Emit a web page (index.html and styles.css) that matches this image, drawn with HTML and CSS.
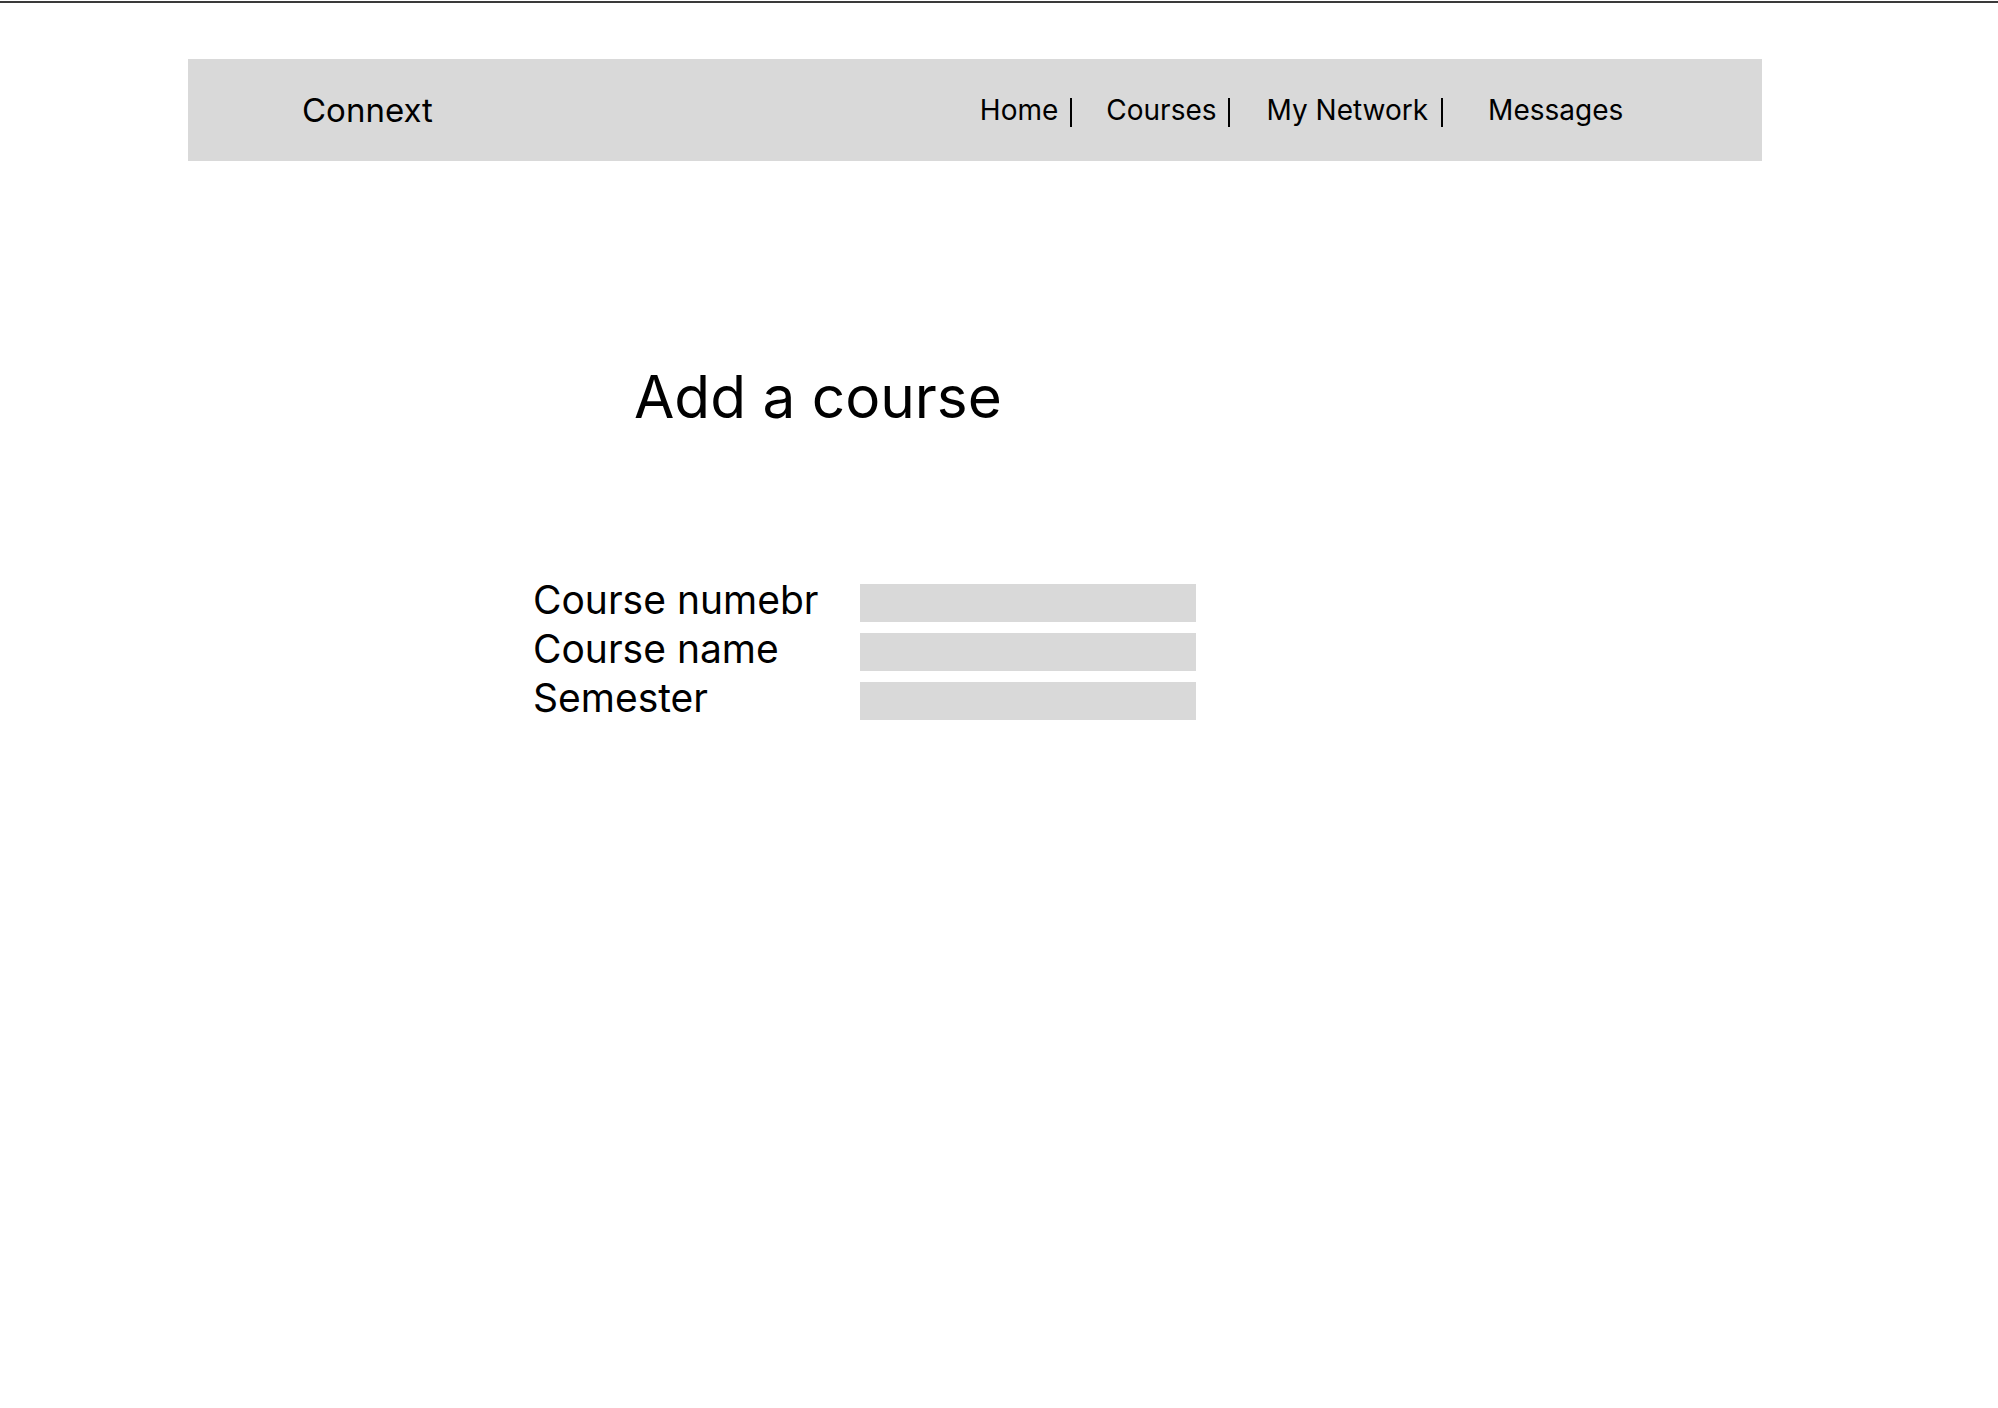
FILE: index.html
```html
<!DOCTYPE html>
<html lang="en">
<head>
<meta charset="utf-8">
<title>Connext - Add a course</title>
<link rel="stylesheet" href="styles.css">
</head>
<body>
<div class="topline"></div>
<header class="header">
  <div class="brand">Connext</div>
  <nav class="nav">
    <span class="nav-item">Home</span><span class="sep sep-1"></span>
    <span class="nav-item">Courses</span><span class="sep sep-2"></span>
    <span class="nav-item">My Network</span><span class="sep sep-3"></span>
    <span class="nav-item">Messages</span>
  </nav>
</header>
<main class="main">
  <h1 class="title">Add a course</h1>
  <form class="form">
    <label class="label" for="num">Course numebr</label>
    <div class="field" id="num"></div>
    <label class="label" for="name">Course name</label>
    <div class="field" id="name"></div>
    <label class="label" for="sem">Semester</label>
    <div class="field" id="sem"></div>
  </form>
</main>
</body>
</html>
```

FILE: styles.css
```css
html, body {
  margin: 0;
  padding: 0;
  background: #ffffff;
}

body {
  font-family: "Inter", "Noto Sans", sans-serif;
  color: #000000;
  width: 1998px;
  min-height: 1408px;
}

.topline {
  margin-top: 1px;
  height: 2px;
  background: #3a3a3a;
}

.header {
  margin: 56px 0 0 188px;
  width: 1574px;
  height: 102px;
  background: #d9d9d9;
  display: flex;
  align-items: center;
  box-sizing: border-box;
  padding-left: 114px;
}

.brand {
  font-size: 33px;
  line-height: 40px;
}

.nav {
  margin-left: 547px;
  display: flex;
  align-items: center;
  font-size: 28px;
  line-height: 34px;
}

.sep {
  display: block;
  width: 2px;
  height: 29px;
  background: #000000;
  margin-top: 4px;
}

.sep-1 { margin-left: 12px; margin-right: 34px; }
.sep-2 { margin-left: 11px; margin-right: 37px; }
.sep-3 { margin-left: 13px; margin-right: 45px; }

.main {
  display: flex;
  flex-direction: column;
}

.title {
  margin: 202px 0 0 634px;
  font-size: 58.5px;
  line-height: 68px;
  font-weight: 400;
}

.form {
  margin: 153px 0 0 533px;
  display: grid;
  grid-template-columns: 327px 336px;
  grid-auto-rows: 38px;
  row-gap: 11px;
}

.label {
  font-size: 39px;
  line-height: 38px;
  margin-top: -3px;
  white-space: nowrap;
}

.field {
  background: #d9d9d9;
  height: 38px;
}
```
